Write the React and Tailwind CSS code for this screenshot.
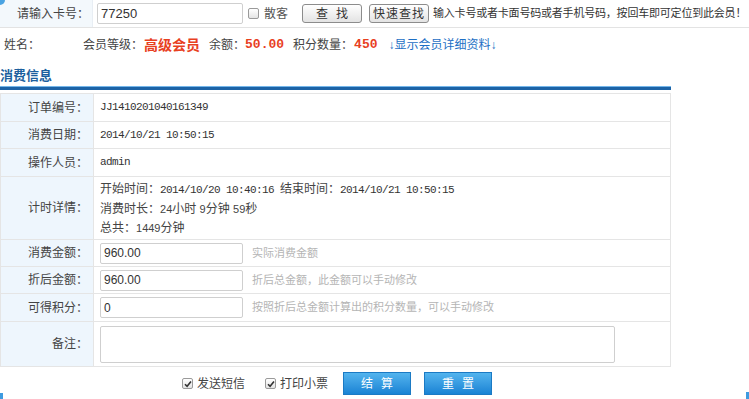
function Check({ checked }) {
  return (
    <span className="inline-flex h-[11px] w-[11px] shrink-0 items-center justify-center rounded-[2px] border border-[#9a9a9a] bg-gradient-to-b from-white to-[#e4e4e4]">
      {checked && (
        <svg width="8" height="8" viewBox="0 0 8 8">
          <path d="M1 4.2 L3.1 6.3 L7 1.6" fill="none" stroke="#333" strokeWidth="1.6" />
        </svg>
      )}
    </span>
  )
}

function Row({ label, h, children }) {
  return (
    <div className={`flex border-b border-[#e5e5e5] last:border-b-0 ${h}`}>
      <div className="flex w-[93px] shrink-0 items-center justify-end border-r border-[#e5e5e5] bg-[#eef6fd] pr-[5px] text-[12px] text-[#444]">
        {label}：
      </div>
      <div className="flex flex-1 items-center pl-[6px]">{children}</div>
    </div>
  )
}

function Field({ value, hint }) {
  return (
    <>
      <div className="flex h-[21px] w-[143px] items-center rounded-[2px] border border-[#cfcfcf] bg-white pl-[3px] font-['Liberation_Sans',sans-serif] text-[12px] text-[#333]">
        {value}
      </div>
      <span className="ml-[9px] text-[11px] text-[#b5b5b5]">{hint}</span>
    </>
  )
}

const mono = "font-['Liberation_Mono','Noto_Sans_CJK_SC',monospace] text-[11px] tracking-[-0.6px] text-[#333]"

export default function App() {
  return (
    <div className="relative h-[399px] w-[749px] overflow-hidden bg-white font-['Liberation_Sans','Noto_Sans_CJK_SC',sans-serif] text-[12px] text-[#333]">
      <div className="absolute left-0 top-0 h-[5px] w-[5px] rounded-br-[5px] bg-[#4aa3e2]" />
      <div className="absolute bottom-0 left-0 h-[6px] w-[3px] bg-[#3e9be0]" />
      <div className="absolute bottom-0 right-0 h-[7px] w-[3px] bg-[#3e9be0]" />

      <div className="flex h-[28px] border-b border-[#e3e3e3]">
        <div className="flex w-[93px] shrink-0 items-center justify-end border-r border-[#e8eef4] bg-[#f3f8fc] pr-[3px] text-[#444]">
          请输入卡号：
        </div>
        <div className="flex shrink-0 items-center whitespace-nowrap pl-[4px]">
          <div className="flex h-[21px] w-[146px] shrink-0 items-center rounded-[2px] border border-[#cfcfcf] pl-[3px] text-[13px]">77250</div>
          <span className="ml-[5px] flex"><Check /></span>
          <span className="ml-[5px] shrink-0 text-[#555]">散客</span>
          <button className="ml-[14px] h-[19px] w-[60px] shrink-0 rounded-[3px] border border-[#8c8c8c] bg-gradient-to-b from-white to-[#e3e3e3] text-[12px] tracking-[8px] indent-[8px] text-[#333]">
            查找
          </button>
          <button className="ml-[7px] h-[19px] w-[60px] shrink-0 rounded-[3px] border border-[#8c8c8c] bg-gradient-to-b from-white to-[#e3e3e3] text-[12px] tracking-[1px] text-[#333]">
            快速查找
          </button>
          <span className="ml-[4px] shrink-0 text-[11px] tracking-[-0.2px] text-[#333]">
            输入卡号或者卡面号码或者手机号码，按回车即可定位到此会员！
          </span>
        </div>
      </div>

      <div className="flex h-[34px] items-center whitespace-nowrap pl-[4px] text-[#444]">
        <span>姓名：</span>
        <span className="ml-[43px]">会员等级：</span>
        <span className="ml-[1px] text-[14px] font-bold text-[#e8401f]">高级会员</span>
        <span className="ml-[9px]">余额：</span>
        <span className="ml-0 font-['Liberation_Mono',monospace] text-[13px] font-bold text-[#e8401f]">50.00</span>
        <span className="ml-[9px]">积分数量：</span>
        <span className="ml-[1px] font-['Liberation_Mono',monospace] text-[13px] font-bold text-[#e8401f]">450</span>
        <span className="ml-[11px] text-[#1d6fc4]">↓显示会员详细资料↓</span>
      </div>

      <div className="flex h-[24px] items-center pt-[4px] text-[13px] font-bold text-[#1c5f9e]">消费信息</div>
      <div className="h-[4px] w-[671px] border-t border-[#74b6ea] bg-[#1d63a6]" />

      <div className="mt-[3px] w-[671px] border border-[#e5e5e5]">
        <Row label="订单编号" h="h-[28px]">
          <span className={mono}>JJ1410201040161349</span>
        </Row>
        <Row label="消费日期" h="h-[27px]">
          <span className={mono}>2014/10/21 10:50:15</span>
        </Row>
        <Row label="操作人员" h="h-[28px]">
          <span className={mono}>admin</span>
        </Row>
        <Row label="计时详情" h="h-[63px]">
          <div className="flex flex-col gap-[1px] leading-[18px] text-[#444]">
            <div>
              开始时间：<span className={mono}>2014/10/20 10:40:16 </span>结束时间：<span className={mono}>2014/10/21 10:50:15</span>
            </div>
            <div>
              消费时长：<span className="text-[11px]">24</span>小时 <span className="text-[11px]">9</span>分钟 <span className="text-[11px]">59</span>秒
            </div>
            <div>
              总共：<span className="text-[11px]">1449</span>分钟
            </div>
          </div>
        </Row>
        <Row label="消费金额" h="h-[27px]">
          <Field value="960.00" hint="实际消费金额" />
        </Row>
        <Row label="折后金额" h="h-[27px]">
          <Field value="960.00" hint="折后总金额，此金额可以手动修改" />
        </Row>
        <Row label="可得积分" h="h-[28px]">
          <Field value="0" hint="按照折后总金额计算出的积分数量，可以手动修改" />
        </Row>
        <Row label="备注" h="h-[44px]">
          <div className="h-[37px] w-[515px] rounded-[2px] border border-[#cfcfcf] bg-white" />
        </Row>
      </div>

      <div className="flex h-[33px] items-center pl-[182px] text-[12px] text-[#444]">
        <Check checked />
        <span className="ml-[4px]">发送短信</span>
        <span className="ml-[20px] flex"><Check checked /></span>
        <span className="ml-[4px]">打印小票</span>
        <button className="ml-[15px] h-[23px] w-[68px] border border-[#1b7ac4] bg-gradient-to-b from-[#52b4ee] to-[#1883d4] text-[12px] tracking-[8px] indent-[8px] text-white">
          结算
        </button>
        <button className="ml-[13px] h-[23px] w-[68px] border border-[#1b7ac4] bg-gradient-to-b from-[#52b4ee] to-[#1883d4] text-[12px] tracking-[8px] indent-[8px] text-white">
          重置
        </button>
      </div>
    </div>
  )
}
